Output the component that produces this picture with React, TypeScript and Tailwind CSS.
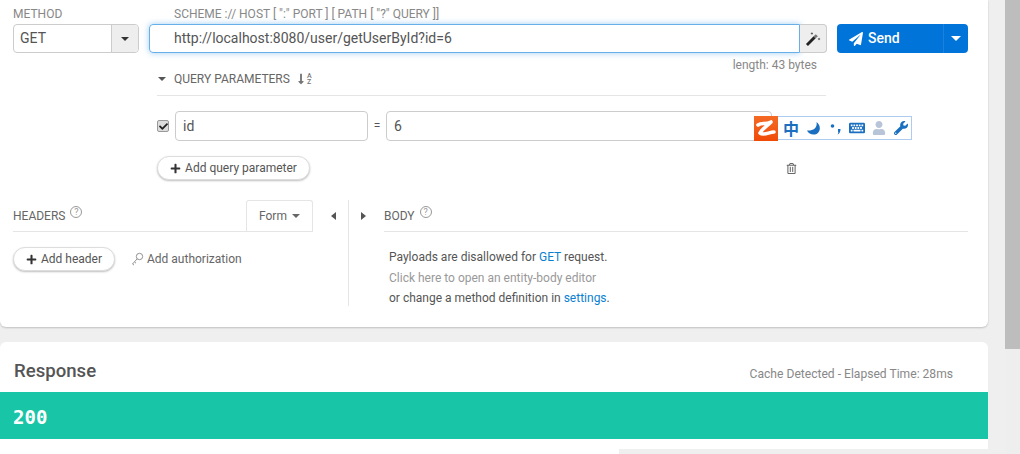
import { FaCheck, FaKeyboard, FaLongArrowAltDown, FaPaperPlane, FaPlus, FaRegTrashAlt, FaUser, FaWrench } from "react-icons/fa";

function Caret({ className }: { className: string }) {
  return <span className={`inline-block h-0 w-0 border-x-[4px] border-t-[4px] border-x-transparent ${className}`} />;
}

function Help() {
  return (
    <span className="ml-[5px] mt-[-7px] flex h-[12px] w-[12px] items-center justify-center rounded-full border border-[#999] text-[9px] leading-none text-[#999]">
      ?
    </span>
  );
}

function PillButton({ label, className }: { label: string; className: string }) {
  return (
    <button className={`flex h-[24px] items-center justify-center gap-[4px] rounded-full border border-[#ddd] bg-white text-[12px] text-[#555] shadow-[0_1px_2px_rgba(0,0,0,0.25)] ${className}`}>
      <FaPlus size={11} className="text-[#333]" />
      {label}
    </button>
  );
}

function ImeToolbar() {
  return (
    <div className="absolute left-[754px] top-[116px] flex items-start">
      <div className="flex h-[25px] w-[24px] items-center justify-center bg-gradient-to-b from-[#f46a24] to-[#f04a06]">
        <svg width="22" height="19" viewBox="0 0 22 19" fill="none" stroke="white" strokeWidth="3.6" strokeLinecap="round" strokeLinejoin="round">
          <path d="M3 6 C7 3 10 6 16 3 C12 7 7 10 5 14 C9 17 14 13 19 13" />
        </svg>
      </div>
      <div className="flex h-[24px] w-[134px] items-center border border-l-0 border-[#aecbf0] bg-white text-[#1a6fc0]">
        <span className="ml-[5px] w-[16px] text-center font-['Noto_Sans_CJK_SC',sans-serif] text-[16px] font-bold leading-none">中</span>
        <svg className="ml-[7px]" width="15" height="15" viewBox="0 0 15 15" fill="#1a6fc0">
          <path d="M10.5 1 C11.5 6 8 10 1 9.5 C3 14 10 15.5 13 10.5 C14.8 7 13.5 3 10.5 1 Z" />
        </svg>
        <svg className="ml-[9px]" width="11" height="13" viewBox="0 0 11 13" fill="#1a6fc0">
          <circle cx="2.5" cy="4" r="1.8" />
          <path d="M8 7 H10.5 C10.5 10 9.5 11.5 7.5 12.5 C8.5 11 8.5 10 8 9.5 Z" />
        </svg>
        <FaKeyboard size={16} className="ml-[8px]" />
        <FaUser size={14} className="ml-[7px] text-[#b8c4d8]" />
        <FaWrench size={14} className="ml-[8px]" />
      </div>
    </div>
  );
}

function RequestSection() {
  return (
    <div className="flex flex-col pl-[13px] pr-[20px]">
      <div className="flex h-[24px] items-center pt-[4px] text-[12px] text-[#888]">
        <span className="w-[161px]">METHOD</span>
        <span>SCHEME :// HOST [ ":" PORT ] [ PATH [ "?" QUERY ]]</span>
      </div>
      <div className="flex h-[29px]">
        <div className="flex w-[126px] rounded-[4px] border border-[#ccc]">
          <div className="flex flex-1 items-center pl-[6px] text-[14px] text-[#555]">GET</div>
          <div className="flex w-[27px] items-center justify-center rounded-r-[3px] border-l border-[#ccc] bg-[#eee]">
            <Caret className="border-t-[#333]" />
          </div>
        </div>
        <div className="ml-[10px] flex w-[651px] items-center rounded-l-[4px] border border-[#66afe9] pl-[24px] text-[14px] text-[#555] shadow-[0_0_6px_rgba(102,175,233,0.6)]">
          http://localhost:8080/user/getUserById?id=6
        </div>
        <div className="flex w-[27px] items-center justify-center rounded-r-[4px] border border-l-0 border-[#ccc] bg-[#eee]">
          <svg width="14" height="14" viewBox="0 0 14 14" fill="none" className="scale-110">
            <path d="M1.5 12.5 L8.5 5.5" stroke="#222" strokeWidth="2.6" />
            <path d="M8.5 5.5 L10.5 3.5" stroke="#777" strokeWidth="2.6" />
            <path d="M6 1 V3 M5 2 H7 M12.5 6 V8 M11.5 7 H13.5" stroke="#555" strokeWidth="0.8" />
          </svg>
        </div>
        <div className="ml-[10px] flex w-[131px] rounded-[4px] bg-[#0074d9] text-white">
          <div className="flex w-[106px] items-center gap-[5px] pl-[12px] text-[14px] font-medium">
            <FaPaperPlane size={14} />
            Send
          </div>
          <div className="flex flex-1 items-center justify-center border-l border-[#1a82de]">
            <Caret className="border-x-[5px] border-t-[5px] border-t-white" />
          </div>
        </div>
      </div>
      <div className="mt-[4px] h-[15px] w-[804px] text-right text-[12px] leading-[16px] text-[#888]">length: 43 bytes</div>
      <div className="ml-[144px] w-[669px]">
        <div className="h-[24px] border-b border-[#e5e5e5] pt-[1px]">
          <div className="flex h-[12px] items-center text-[12px] leading-[12px] text-[#666]">
            <Caret className="ml-[1px] border-t-[#555]" />
            <span className="ml-[8px]">QUERY PARAMETERS</span>
            <FaLongArrowAltDown size={12} className="ml-[5px] text-[#777]" />
            <span className="flex flex-col text-[7px] font-medium leading-[6px] text-[#777]">
              <span>A</span>
              <span>Z</span>
            </span>
          </div>
        </div>
        <div className="mt-[15px] flex h-[30px] w-[615px] items-center text-[14px] text-[#555]">
          <span className="flex h-[12px] w-[12px] items-center justify-center rounded-[2px] border border-[#999] bg-[#ddd]">
            <FaCheck size={9} className="text-[#222]" />
          </span>
          <div className="ml-[6px] flex h-full w-[193px] items-center rounded-[4px] border border-[#ccc] pl-[7px]">id</div>
          <span className="w-[18px] text-center text-[12px]">=</span>
          <div className="flex h-full flex-1 items-center rounded-[4px] border border-[#ccc] pl-[7px]">6</div>
        </div>
        <div className="mt-[15px] flex h-[24px] items-center">
          <PillButton label="Add query parameter" className="w-[153px]" />
          <FaRegTrashAlt size={11} className="ml-[476px] text-[#666]" />
        </div>
      </div>
    </div>
  );
}

function HeadersPane() {
  return (
    <div className="w-[300px]">
      <div className="flex h-[32px] border-b border-[#e5e5e5]">
        <div className="flex flex-1 items-center text-[12px] text-[#666]">
          HEADERS
          <Help />
        </div>
        <div className="flex w-[67px] items-center justify-center gap-[5px] rounded-t-[3px] border-x border-t border-[#e5e5e5] bg-white text-[12px] text-[#666]">
          Form
          <Caret className="border-t-[#666]" />
        </div>
      </div>
      <div className="mt-[15px] flex h-[24px] items-center">
        <PillButton label="Add header" className="w-[102px]" />
        <svg className="ml-[16px]" width="13" height="14" viewBox="0 0 13 14" fill="none" stroke="#888" strokeWidth="0.9">
          <circle cx="8.5" cy="4.5" r="3.2" />
          <path d="M6.2 6.8 L1.5 12 L3 13 M3.6 10 L5 11.2" />
        </svg>
        <span className="ml-[3px] text-[12px] text-[#666]">Add authorization</span>
      </div>
    </div>
  );
}

function BodyPane() {
  return (
    <div className="flex-1">
      <div className="flex h-[32px] items-center border-b border-[#e5e5e5] text-[12px] text-[#666]">
        BODY
        <Help />
      </div>
      <div className="mt-[15px] pl-[5px] text-[12px] leading-[20.5px] text-[#555]">
        <p>
          Payloads are disallowed for <span className="text-[#0b7fd1]">GET</span> request.
        </p>
        <p className="text-[#999]">Click here to open an entity-body editor</p>
        <p>
          or change a method definition in <span className="text-[#0b7fd1]">settings</span>.
        </p>
      </div>
    </div>
  );
}

export default function App() {
  return (
    <div className="flex h-[454px] w-[1020px] overflow-hidden bg-[#efefef] font-['Roboto',sans-serif]">
      <div className="flex w-[1005px] flex-col">
        <div className="relative h-[327px] w-[988px] rounded-b-[6px] bg-white shadow-[0_1px_2px_rgba(0,0,0,0.2)]">
          <RequestSection />
          <div className="mt-[20px] flex pl-[13px] pr-[20px]">
            <HeadersPane />
            <div className="flex w-[71px] items-start">
              <div className="flex h-[32px] w-[35px] items-center justify-center pl-[6px]">
                <span className="h-0 w-0 border-y-[4px] border-r-[5px] border-y-transparent border-r-[#555]" />
              </div>
              <div className="flex h-[106px] flex-1 justify-center border-l border-[#e5e5e5] pr-[6px] pt-[12px]">
                <span className="h-0 w-0 border-y-[4px] border-l-[5px] border-y-transparent border-l-[#555]" />
              </div>
            </div>
            <BodyPane />
          </div>
          <ImeToolbar />
        </div>
        <div className="mt-[15px] flex h-[112px] w-[988px] flex-col rounded-t-[6px] bg-white">
          <div className="flex h-[50px] items-center justify-between pl-[14px] pr-[35px] pt-[10px]">
            <span className="text-[18.6px] font-medium text-[#555]">Response</span>
            <span className="mt-[4px] text-[12.1px] text-[#888]">Cache Detected - Elapsed Time: 28ms</span>
          </div>
          <div className="flex h-[47px] items-center bg-[#18c5a6] pl-[13px] pt-[3px] font-['DejaVu_Sans_Mono',monospace] text-[19px] font-bold text-white">
            200
          </div>
          <div className="h-[10px]" />
          <div className="ml-[619px] h-[5px] bg-[#efefef]" />
        </div>
      </div>
      <div className="w-[15px] bg-[#eee]">
        <div className="h-[349px] bg-[#bdbdbd]" />
      </div>
    </div>
  );
}
